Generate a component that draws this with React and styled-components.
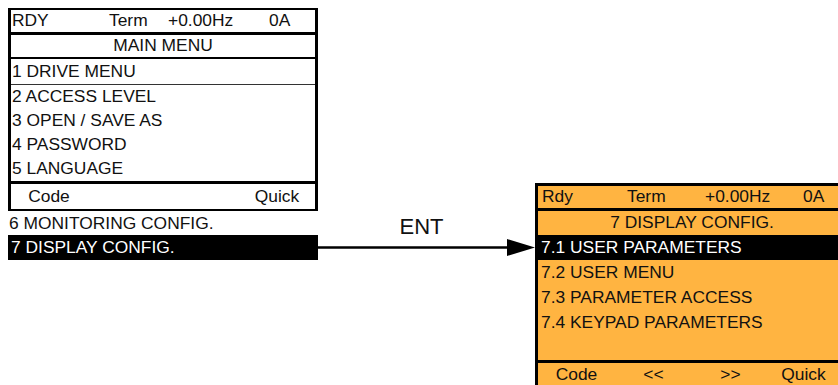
import React from "react";
import styled, { createGlobalStyle } from "styled-components";

const GlobalStyle = createGlobalStyle`
  html, body {
    margin: 0;
    padding: 0;
    background: #fff;
    overflow: hidden;
  }
  body {
    font-family: "Liberation Sans", Arial, sans-serif;
    color: #111;
  }
`;

const ORANGE = "#ffb441";

const Page = styled.div`
  display: flex;
  align-items: flex-start;
  padding: 8px 0 0 8px;
  width: 830px;
  overflow: hidden;
`;

const Column = styled.div`
  width: ${props => props.$width || 310}px;
  flex-shrink: 0;
  margin-top: ${props => props.$top || 0}px;
`;

const Screen = styled.div`
  background: ${props => (props.$orange ? ORANGE : "#fff")};
  border-style: solid;
  border-color: #000;
  border-width: ${props => (props.$orange ? "3px 0 0 3px" : "2px 3px 2px 3px")};
  font-size: 17.4px;
  line-height: 1;
  overflow: hidden;
`;

const StatusBar = styled.div`
  display: grid;
  grid-template-columns: ${props => props.$cols};
  align-items: center;
  height: 22px;
  padding-left: ${props => props.$pad}px;
  border-bottom: 3px solid #000;
  white-space: nowrap;
`;

const Title = styled.div`
  display: flex;
  align-items: center;
  justify-content: center;
  height: ${props => props.$height}px;
  border-bottom: ${props => (props.$rule ? "2px solid #000" : "none")};
  padding-left: ${props => props.$shift || 0}px;
  white-space: nowrap;
`;

const MenuItem = styled.div`
  display: flex;
  align-items: center;
  height: ${props => props.$height || 24}px;
  padding-left: ${props => props.$pad || 1}px;
  white-space: nowrap;
  background: ${props => (props.$selected ? "#000" : "transparent")};
  color: ${props => (props.$selected ? "#fff" : "#111")};
  border-bottom: ${props => (props.$divider ? "1px solid #333" : "none")};
  font-size: 17.4px;
`;

const Spacer = styled.div`
  height: 25px;
`;

const Footer = styled.div`
  display: grid;
  grid-template-columns: ${props => props.$cols || "repeat(4, 1fr)"};
  align-items: center;
  height: ${props => props.$height}px;
  border-top: 3px solid #000;
  text-align: center;
  white-space: nowrap;
`;

const Connector = styled.div`
  width: 217px;
  flex-shrink: 0;
  margin-top: 208px;
  display: flex;
  flex-direction: column;
`;

const ArrowLabel = styled.div`
  height: 22px;
  line-height: 22px;
  font-size: 22px;
  text-align: center;
  padding-right: 10px;
`;

const ArrowSvg = styled.svg`
  display: block;
  margin-top: 1px;
`;

const Arrow = () => (
  <ArrowSvg width="217" height="17" viewBox="0 0 217 17">
    <line x1="0" y1="8.5" x2="192" y2="8.5" stroke="#000" strokeWidth="2.5" />
    <polygon points="189,0 217,8.5 189,17" fill="#000" />
  </ArrowSvg>
);

const mainMenu = [
  "1 DRIVE MENU",
  "2 ACCESS LEVEL",
  "3 OPEN / SAVE AS",
  "4 PASSWORD",
  "5 LANGUAGE"
];

const displayMenu = [
  "7.2 USER MENU",
  "7.3 PARAMETER ACCESS",
  "7.4 KEYPAD PARAMETERS"
];

const App = () => {
  return (
    <>
      <GlobalStyle />
      <Page>
        <Column>
          <Screen>
            <StatusBar $cols="97px 59px 101px 1fr" $pad={1}>
              <span>RDY</span>
              <span>Term</span>
              <span>+0.00Hz</span>
              <span>0A</span>
            </StatusBar>
            <Title $height={22} $rule>MAIN MENU</Title>
            {mainMenu.map((item, i) => (
              <MenuItem key={item} $divider={i === 0} $height={i === 0 ? 25 : 24}>
                {item}
              </MenuItem>
            ))}
            <Footer $height={25}>
              <span>Code</span>
              <span />
              <span />
              <span>Quick</span>
            </Footer>
          </Screen>
          <MenuItem $height={24}>6 MONITORING CONFIG.</MenuItem>
          <MenuItem $height={25} $selected $pad={3}>7 DISPLAY CONFIG.</MenuItem>
        </Column>

        <Connector>
          <ArrowLabel>ENT</ArrowLabel>
          <Arrow />
        </Connector>

        <Column $top={175} $width={303}>
          <Screen $orange>
            <StatusBar $cols="85px 78px 98px 1fr" $pad={4}>
              <span>Rdy</span>
              <span>Term</span>
              <span>+0.00Hz</span>
              <span>0A</span>
            </StatusBar>
            <Title $height={24} $shift={8}>7 DISPLAY CONFIG.</Title>
            <MenuItem $height={25} $selected $pad={3}>7.1 USER PARAMETERS</MenuItem>
            {displayMenu.map(item => (
              <MenuItem key={item} $height={25} $pad={3}>
                {item}
              </MenuItem>
            ))}
            <Spacer />
            <Footer $height={24} $cols="77px 77px 77px 1fr">
              <span>Code</span>
              <span>&lt;&lt;</span>
              <span>&gt;&gt;</span>
              <span>Quick</span>
            </Footer>
          </Screen>
        </Column>
      </Page>
    </>
  );
};

export default App;
